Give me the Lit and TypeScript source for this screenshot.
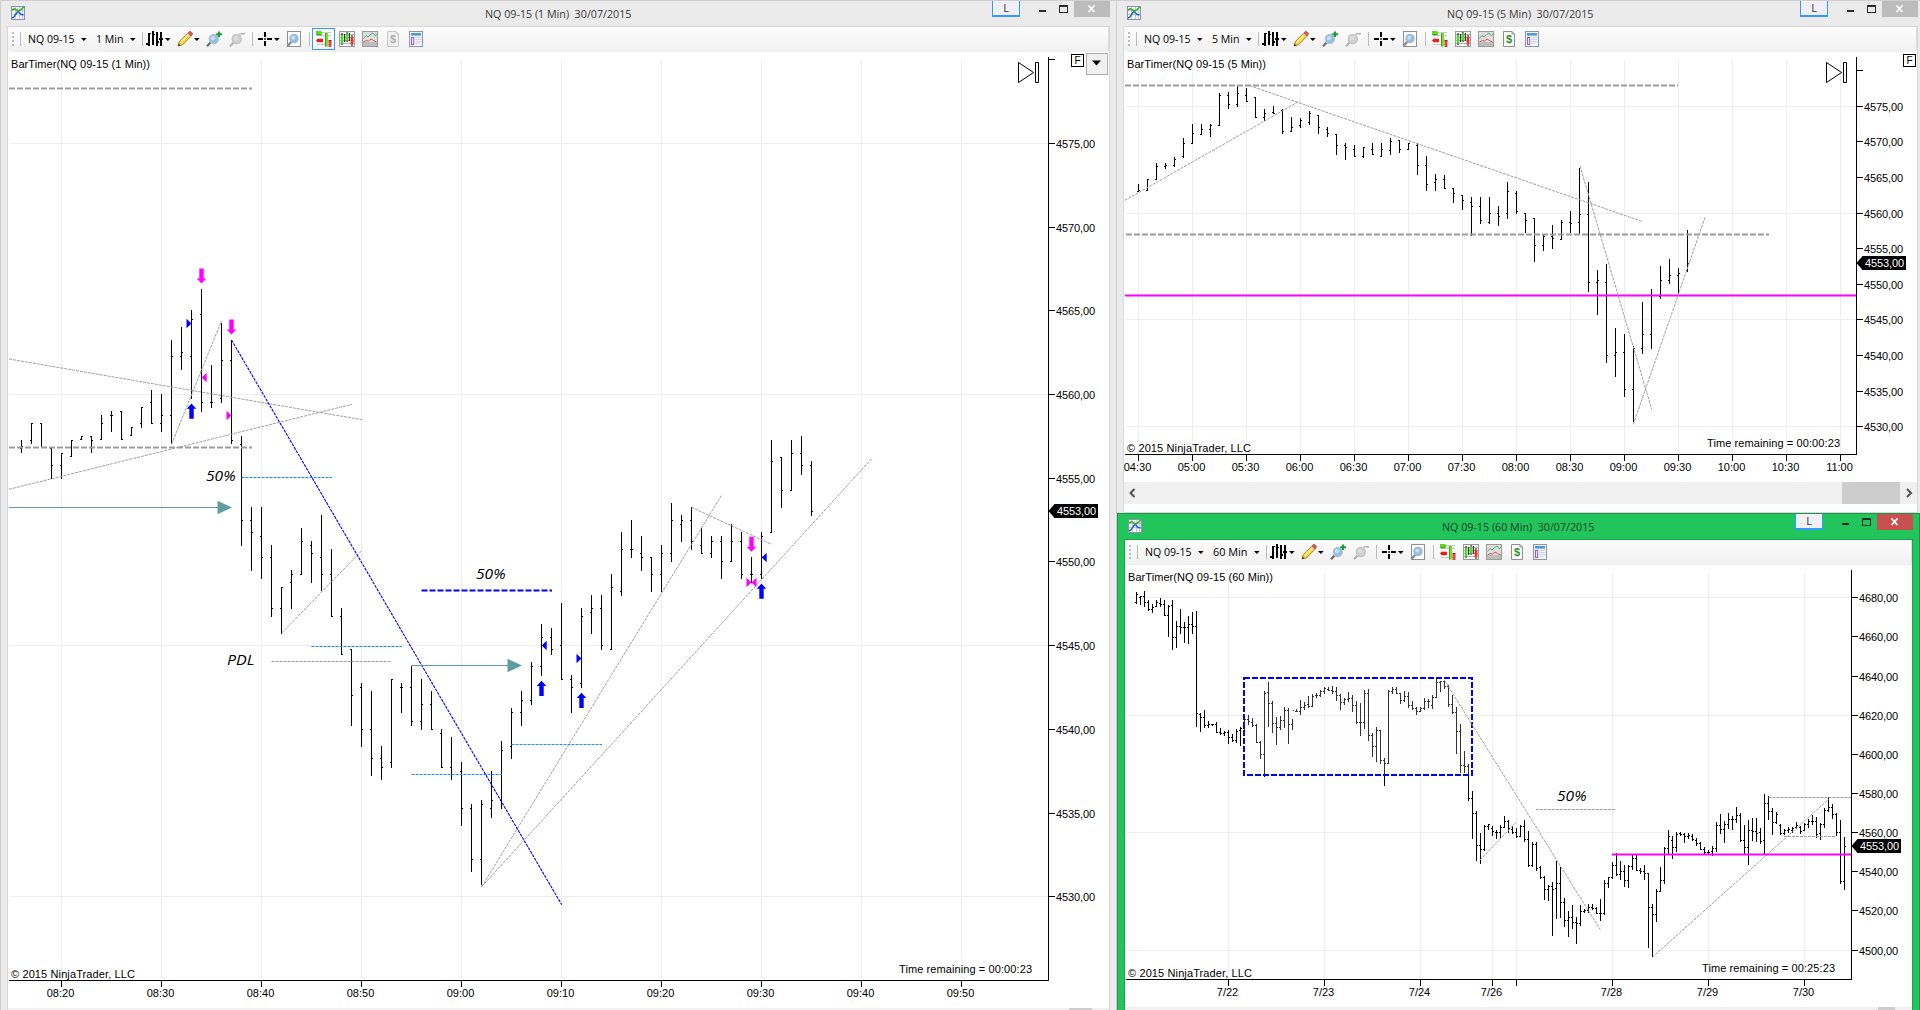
import { LitElement, html, svg, css, nothing } from "lit";
import { customElement, property } from "lit/decorators.js";

/* ---------- data model ---------- */

/** A run of OHLC bars: rows hold high, low, open, close measured down from `y` in 1/div px. */
interface Run { x: number; step: number; y: number; div: number; rows: string; }
interface Line { x1: number; y1: number; x2: number; y2: number; kind: string; }
interface Note { x: number; y: number; w: number; text: string; }
interface Mark { x: number; y: number; kind: "up" | "down" | "left" | "right"; tone: "buy" | "sell"; }
interface Chart {
  box: [number, number, number, number];
  left: number; top: number; axisX: number; axisTop: number; axisY: number;
  gridX: number[]; gridY: number[];
  prices: [number, string][]; times: [number, string][];
  last: number; labelX: number;
  runs: Run[]; lines: Line[]; notes: Note[]; marks: Mark[]; arrows: [number, number, number][];
  header: Note; copy: Note; timer: Note;
  zone?: [number, number, number, number];
  play?: [number, number]; flag?: [number, number]; menu?: [number, number];
}
interface Win {
  kind: string; title: string; titleW: number; interval: string; intervalW: number;
  active: boolean; picked: boolean; dollar: boolean; chart: Chart;
}

const ln = (kind: string, x1: number, y1: number, x2: number, y2: number): Line => ({ kind, x1, y1, x2, y2 });
const note = (text: string, x: number, y: number, w: number): Note => ({ text, x, y, w });
const mark = (kind: Mark["kind"], tone: Mark["tone"], x: number, y: number): Mark => ({ kind, tone, x, y });
const range = (n: number, start: number, step: number) => Array.from({ length: n }, (_, i) => start + i * step);

const oneMin: Chart = {
  box: [8, 52, 1101, 956],
  left: 10, top: 60, axisX: 1048, axisTop: 57, axisY: 980,
  gridX: range(10, 61, 100), gridY: [143, 394, 645, 896],
  prices: [[59, ""], [143, "4575,00"], [227, "4570,00"], [310, "4565,00"], [394, "4560,00"], [478, "4555,00"],
    [561, "4550,00"], [645, "4545,00"], [729, "4540,00"], [813, "4535,00"], [896, "4530,00"]],
  times: [[61, "08:20"], [161, "08:30"], [261, "08:40"], [361, "08:50"], [461, "09:00"], [561, "09:10"],
    [661, "09:20"], [761, "09:30"], [861, "09:40"], [961, "09:50"]],
  last: 511, labelX: 1056,
  runs: [
    { x: 21, step: 10, y: 240, div: 3, rows: `600 640 625 620,549 613 601 549,549 624 549 624,624 716 624 676,640 716 676 640,601 652 652 601,
      589 601 601 589,589 640 589 601,526 601 601 550,513 577 526 526,513 601 514 601,562 589 589 562,501 563 550 502,450 551 487 550,
      462 577 550 526,300 613 526 349,261 389 349 337,210 476 349 238,147 515 223 487,375 503 487 487,249 488 475 361,300 613 361 601,588 917 613 841` },
    { x: 251, step: 10, y: 500, div: 3, rows: `21 212 62 97,21 236 109 172,135 350 172 325,262 402 325 262,210 326 247 223,84 224 223 124,
      124 249 136 160,45 274 172 223,147 350 223 349,324 464 349 463,448 677 448 586,549 740 562 688,573 828 688 775,738 840 775 802,
      538 803 788 538,549 638 562 562,498 678 562 664,538 690 664 613,573 689 613 688,688 803 700 802,712 839 802 824,787 977 814 925,
      913 1116 925 1078,901 1155 1078 913,813 953 925 901,724 926 901 751,625 776 739 637,573 677 637 601,487 614 601 499,373 528 499 412,
      384 464 412 448,309 539 436 538,526 638 538 562,324 564 550 349,286 402 337 325,286 449 325 436,222 449 448 262` },
    { x: 621, step: 10, y: 420, div: 3, rows: `336 527 514 388,300 413 388 388,348 452 400 412,412 516 412 463,375 516 463 400,249 425 400 301,
      286 365 313 301,262 389 301 364,324 401 376 400,348 413 400 364,348 476 364 424,312 425 424 364,336 476 364 463,412 488 463 463,
      336 476 463 349,60 339 337 124,112 263 112 211,60 212 211 100,48 164 100 136,124 288 136 274` },
  ],
  lines: [
    ln("level", 9, 88.5, 252, 88.5), ln("level", 9, 447.5, 252, 447.5),
    ln("trend", 9, 359, 362, 419.7), ln("trend", 9, 489.3, 352, 404.3), ln("trend", 171.5, 444.3, 221.5, 320.7),
    ln("trend", 281.5, 633.3, 361.7, 550.7), ln("trend", 271.5, 661.5, 391, 661.5),
    ln("trend", 481.7, 886.7, 721.3, 495.7), ln("trend", 481.7, 886.7, 871.7, 458.7), ln("trend", 691.5, 507.3, 771.5, 544.3),
    ln("half", 241.5, 477.5, 332, 477.5), ln("half", 311.5, 646.5, 402, 646.5), ln("half", 411.5, 774.5, 502, 774.5), ln("half", 511.5, 744.5, 602, 744.5),
    ln("bluelevel", 421.5, 590.5, 552, 590.5), ln("bluetrend", 231.5, 340, 561.7, 904.7),
  ],
  arrows: [[9, 232, 507.5], [411.5, 522, 665.5]],
  marks: [
    mark("down", "sell", 201.5, 283.5), mark("down", "sell", 231.5, 334.5), mark("down", "sell", 751.5, 551.7),
    mark("up", "buy", 191.5, 403.5), mark("up", "buy", 541.5, 680.7), mark("up", "buy", 581.5, 692.7), mark("up", "buy", 761.5, 583.5),
    mark("right", "buy", 191.5, 323.5), mark("left", "sell", 201.7, 377.5), mark("right", "sell", 231.5, 415.5),
    mark("left", "buy", 541.7, 645.5), mark("right", "buy", 581.5, 658.5), mark("left", "buy", 761.7, 557.5),
    mark("right", "sell", 751.5, 582.5), mark("left", "sell", 751.5, 582.5),
  ],
  notes: [note("50%", 206, 481, 29.5), note("50%", 476, 579, 29.5), note("PDL", 227, 665, 27.5)],
  header: note("BarTimer(NQ 09-15 (1 Min))", 11, 68, 139),
  copy: note("© 2015 NinjaTrader, LLC", 11, 978, 124),
  timer: note("Time remaining = 00:00:23", 899, 973, 133),
  play: [1018, 62], flag: [1071, 54], menu: [1086, 53],
};

const fiveMin: Chart = {
  box: [1124, 52, 793, 430],
  left: 1126, top: 60, axisX: 1856, axisTop: 57, axisY: 454,
  gridX: range(14, 1138, 54), gridY: [106, 213, 319, 426],
  prices: [[70, ""], [106, "4575,00"], [141, "4570,00"], [177, "4565,00"], [213, "4560,00"], [248, "4555,00"],
    [284, "4550,00"], [319, "4545,00"], [355, "4540,00"], [391, "4535,00"], [426, "4530,00"]],
  times: ["04:30", "05:00", "05:30", "06:00", "06:30", "07:00", "07:30", "08:00", "08:30", "09:00", "09:30", "10:00", "10:30", "11:00"]
    .map((t, i) => [1138 + i * 54, t] as [number, string]),
  last: 263, labelX: 1864,
  runs: [
    { x: 1138, step: 9, y: 70, div: 3, rows: `342 366 364 361,328 362 361 328,279 329 328 289,280 296 289 286,262 290 286 268,204 264 259 220,
      162 221 219 190,162 194 192 178,162 200 178 166,69 167 166 76,66 116 75 103,48 110 103 70,54 96 76 94,82 144 82 142,118 152 142 130,
      108 132 127 130,118 192 120 184,142 185 184 172,144 174 166 151,123 164 157 130,135 192 136 172,171 200 178 190,193 254 193 226,
      219 269 226 232,226 261 238 259,231 263 259 232,219 255 238 253,219 260 259 238,204 254 241 214,210 248 212 238,219 240 238 220,
      219 315 226 286,258 362 286 343,312 362 337 328,315 356 328 355,354 399 355 370,376 419 376 391,381 499 397 409,381 462 409 451,
      381 461 457 430,408 467 430 439,336 446 430 364,363 432 370 424,430 489 430 451` },
    { x: 1534, step: 9, y: 0, div: 2.7034, rows: `590 708 590 663,633 679 663 639,607 673 639 645,595 648 647 601,570 631 601 604,453 634 601 580,
      491 789 580 763,730 852 763 758,714 981 763 961,886 1019 961 953,902 1073 953 1053,936 1140 1053 942,816 957 942 904,780 944 904 799,
      719 808 801 758,699 769 758 744,725 797 744 739,622 735 730 712` },
  ],
  lines: [
    ln("level", 1125, 85.5, 1678, 85.5), ln("level", 1126, 234.5, 1769, 234.5), ln("pivot", 1125, 295.5, 1856, 295.5),
    ln("trend", 1125, 200.3, 1299.7, 101), ln("trend", 1249.7, 85.7, 1642.7, 221.6),
    ln("trend", 1580, 166, 1651.7, 409.2), ln("trend", 1633.3, 424.3, 1705, 217.5),
  ],
  arrows: [], marks: [], notes: [],
  header: note("BarTimer(NQ 09-15 (5 Min))", 1127, 68, 139),
  copy: note("© 2015 NinjaTrader, LLC", 1127, 452, 124),
  timer: note("Time remaining = 00:00:23", 1707, 447, 133),
  play: [1826, 62], flag: [1903, 54],
};

const hourly: Chart = {
  box: [1125, 565, 787, 442],
  left: 1127, top: 573, axisX: 1851, axisTop: 570, axisY: 979,
  gridX: [1228, 1324, 1420, 1492, 1516, 1612, 1708, 1804], gridY: [597, 715, 832, 950],
  prices: [[597, "4680,00"], [636, "4660,00"], [676, "4640,00"], [715, "4620,00"], [754, "4600,00"], [793, "4580,00"],
    [832, "4560,00"], [871, "4540,00"], [910, "4520,00"], [950, "4500,00"]],
  times: [[1228, "7/22"], [1324, "7/23"], [1420, "7/24"], [1492, "7/26"], [1516, ""], [1612, "7/28"], [1708, "7/29"], [1804, "7/30"]],
  last: 846, labelX: 1859,
  runs: [
    { x: 1136, step: 4, y: 500, div: 3, rows: `275 312 308 284,288 314 292 290,273 322 289 307,300 334 308 328,312 340 328 321,300 322 319 306,
      294 320 309 312,300 348 312 345,315 411 345 318,300 450 315 412,363 444 412 378,327 402 378 381,366 429 381 381,348 432 381 372,
      336 402 374 378,333 681 378 640,640 696 642 651,630 684 651 675,664 684 675 673,672 678 673 673,666 700 672 696,684 705 697 699,
      693 709 699 696,690 732 696 711,702 726 712 720,687 729 720 694,681 738 690 685,657 690 685 658,645 675 658 664,654 681 667 676,
      672 729 676 727,723 777 727 764,573 830 764 580,546 681 578 609,603 699 609 669,651 735 669 681,648 690 681 660,621 684 660 630,
      624 732 630 672,657 690 672 631,627 636 633 634,600 645 634 622,606 630 622 616,588 624 613 618,582 622 618 588,579 595 587 585,
      570 591 585 573,561 582 573 566,561 574 567 570,558 582 570 573,561 603 573 585,582 630 585 606,594 615 606 597,576 606 597 594,
      585 636 594 615,603 672 615 666,609 708 666 667,570 687 667 579,567 723 579 706,699 771 706 739,681 786 739 692,690 792 692 780,
      774 858 780 789,570 793 789 573,561 582 573 567,561 582 567 580,579 612 580 602,573 606 602 588,576 624 588 615,603 630 615 624,
      621 645 624 633,621 636 633 624,594 630 624 603,597 624 603 603,585 627 615 591,537 594 591 546,543 576 546 543,540 567 543 558,
      555 621 558 612,585 642 612 636,621 762 636 693,672 819 693 795,753 819 795 798,792 902 798 895` },
    { x: 1472, step: 4, y: 680, div: 3, rows: `333 477 355 400,393 543 400 496,459 552 496 508,435 513 508 439,432 449 439 434,438 468 444 454,
      450 477 456 458,435 474 458 441,408 444 441 424,420 459 424 444,438 462 447 458,444 474 456 470,435 471 468 438,420 486 438 478,
      453 561 478 556,486 561 556 493,486 573 493 565,558 597 563 592,588 660 592 628,615 663 628 618,606 768 618 627,543 717 624 610,
      561 714 610 667,654 741 667 721,693 771 721 711,675 747 711 727,711 792 727 730,675 738 730 694,687 699 694 690,672 699 690 681,
      672 690 681 684,681 702 684 700,657 723 700 700,600 705 700 609,591 624 609 592,546 597 592 556,519 588 556 583,543 600 583 574,
      555 621 574 600,555 624 600 559,525 570 559 534,525 573 534 570,564 582 570 574,555 600 574 580,579 804 580 682,672 832 682 703,
      627 726 703 634,561 636 634 601,501 612 601 505,450 522 505 468,468 537 480 502,456 516 502 463,456 468 460 462,459 489 462 468,
      459 477 468 465,462 483 468 478,474 498 480 490,486 510 490 508,501 525 508 517,510 522 517 516,498 528 514 506,426 516 506 435,
      402 462 435 447,423 489 447 432,399 447 432 417,408 450 417 418,381 429 418 405,399 486 405 480,435 522 480 502,420 555 502 450,
      414 483 450 454,414 486 454 460,444 492 456 484,342 525 481 369,348 420 369 393,384 465 394 426,396 432 426 403,432 465 435 460,
      447 465 460 450,441 459 450 448,441 459 450 444,426 447 441 435,438 462 441 454,430 453 450 433,417 444 433 423,405 435 423 423,
      411 474 423 462,429 480 460 432,384 444 432 390,351 396 390 381,372 417 381 402,399 468 402 457,420 612 457 604,471 630 604 498` },
  ],
  lines: [
    ln("trend", 1444.3, 680, 1600.3, 929.7), ln("trend", 1480, 860, 1516.7, 821.7), ln("trend", 1652.3, 957.3, 1828.7, 799.3),
    ln("trend", 1768.5, 797.5, 1851, 797.5), ln("trend", 1784, 836.5, 1836, 836.5), ln("trend", 1536, 809.5, 1616, 809.5),
    ln("pivot", 1612, 854.5, 1851, 854.5),
  ],
  arrows: [], marks: [],
  notes: [note("50%", 1557, 801, 29.5)],
  header: note("BarTimer(NQ 09-15 (60 Min))", 1128, 581, 145),
  copy: note("© 2015 NinjaTrader, LLC", 1128, 977, 124),
  timer: note("Time remaining = 00:25:23", 1702, 972, 133),
  zone: [1244, 678, 228, 97],
};

/* ---------- icons ---------- */

const appIcon = svg`<svg class="ic" width="14" height="14" viewBox="0 0 14 14">
  <rect x=".5" y=".5" width="13" height="13" fill="#f4f4fb" stroke="#8f8fb0"/>
  <path d="M1 4.5h12M1 8.5h12M4.5 1v12M8.5 1v12M11.5 1v12" stroke="#bcbcd4" stroke-width=".8"/>
  <path d="M1 12c1-.2 2-.6 2.600-2S5 8 6 6.500 8 6 9 7.500s1.500 1.500 3.500 1.200" fill="none" stroke="#1d63c8" stroke-width="1.500"/>
  <path d="M1 4c1.500-.8 2.500-1.800 3.500-.8S7 4.800 8.500 4.500 11.500 2.500 13 .8" fill="none" stroke="#35b51c" stroke-width="1.600"/></svg>`;

const barsIcon = svg`<svg class="ic bars" width="17" height="16" viewBox="0 0 17 16" shape-rendering="crispEdges">
  <path d="M2 2h2v13H2zM0 12h2v2H0zM4 2h1v1H4zM6 0h2v14H6zM8 3h1v1H8zM10 1h2v14h-2zM12 10h1v2h-1zM14 1h2v14h-2zM13 7h4v2h-4z" fill="#000"/></svg>`;

const pencilIcon = svg`<svg class="ic pencil" width="16" height="16" viewBox="0 0 16 16">
  <path d="M1 15l1.300-4.500L11 1.800l3.300 3.200L5.500 13.800z" fill="#f7d437" stroke="#8d6b1c" stroke-width=".8"/>
  <path d="M3.500 11.800L12 3.300" stroke="#fff3a0" stroke-width="1.300"/>
  <path d="M11 1.800l1.300-1.200q.8-.6 1.500 0l1.500 1.500q.6.8 0 1.500L14.200 5z" fill="#e25b4a" stroke="#a33a2c" stroke-width=".6"/>
  <path d="M10.200 2.600l3.200 3.200" stroke="#c9c9c9" stroke-width="1.200"/>
  <path d="M1 15l.7-2.300 1.700 1.600z" fill="#222"/></svg>`;

const lens = (on: boolean) => svg`
  <path d="M1 15.300L5.300 10.800" stroke=${on ? "#6d6d6d" : "#b5b5b5"} stroke-width="2.200"/>
  <circle cx="7.800" cy="8" r="4.600" fill=${on ? "#8fbfe6" : "#cfcfcf"} stroke=${on ? "#b9c3cc" : "#c4c4c4"} stroke-width="1.200"/>
  <circle cx="7" cy="7.200" r="2.200" fill=${on ? "#c4e0f6" : "#dcdcdc"}/>`;

const zoomInIcon = svg`<svg class="ic zin" width="16" height="16" viewBox="0 0 16 16">${lens(true)}
  <path d="M13 .500v5.500M10.200 3.200H16" stroke="#12a22c" stroke-width="2"/></svg>`;
const zoomOutIcon = svg`<svg class="ic zout" width="16" height="16" viewBox="0 0 16 16">${lens(false)}
  <path d="M10.500 2.800H16" stroke="#bdbdbd" stroke-width="1.800"/></svg>`;

const crossIcon = svg`<svg class="ic cross" width="14" height="14" viewBox="0 0 14 14" shape-rendering="crispEdges">
  <path d="M6 0h2v5H6zM6 9h2v5H6zM0 6h5v2H0zM9 6h5v2H9z" fill="#000"/><path d="M6 6h2v2H6z" fill="#555"/></svg>`;

const pageIcon = svg`<svg class="ic page" width="16" height="16" viewBox="0 0 16 16">
  <rect x="1.500" y=".5" width="13" height="15" fill="#fff" stroke="#8f8f8f"/>
  <path d="M1.500 15L5.500 10.500" stroke="#8a8a8a" stroke-width="2.400"/>
  <circle cx="8" cy="7.500" r="4.200" fill="#8fbfe6" stroke="#a9bccb" stroke-width="1.200"/>
  <circle cx="7.300" cy="6.800" r="2" fill="#c4e0f6"/></svg>`;

const traderIcon = svg`<svg class="ic" width="16" height="16" viewBox="0 0 16 16">
  <path d="M1 4.500h14M1 13.500h14M7 1.500h8" stroke="#c9c9c9" stroke-width="1.200"/>
  <path d="M0 0h5l2 2-2 2H0z" fill="#5fd81c"/><path d="M.500 3.800h5" stroke="#2d7d0c" stroke-width=".8"/>
  <path d="M0 9.500l1.500-1.700h5.500v3.400H1.500z" fill="#e8201c"/>
  <rect x="9" y="2" width="3" height="13.500" fill="#6fe02c"/><rect x="9" y="2" width="1" height="13.500" fill="#4a9c1c"/>
  <rect x="12.500" y="10" width="3" height="6" fill="#e04a44"/><rect x="12.500" y="9" width="3" height="1.200" fill="#8e2a26"/></svg>`;

const candleIcon = svg`<svg class="ic" width="16" height="16" viewBox="0 0 16 16">
  <rect x=".5" y=".5" width="15" height="15" fill="#f6f6f6" stroke="#9b9b9b"/>
  <path d="M1 3.500h14M1 6.500h14M1 9.500h14M1 12.500h14" stroke="#b4b4b4"/>
  <path d="M3 2v12M5.700 3v8M8 1v10M10.300 2v8M13 4v11" stroke="#111" stroke-width="1"/>
  <rect x="1.800" y="4.500" width="2.400" height="8" fill="#48e020"/>
  <rect x="6.900" y="2.500" width="2.200" height="7" fill="#48e020"/>
  <rect x="11.700" y="6" width="2.600" height="7" fill="#ee2b25"/></svg>`;

const indicatorIcon = svg`<svg class="ic" width="16" height="16" viewBox="0 0 16 16">
  <rect x=".5" y=".5" width="15" height="15" fill="#dedede" stroke="#9b9b9b"/><rect x="1" y="11" width="14" height="4" fill="#bdbdbd"/>
  <path d="M1.500 7.500L4 4.500l2 1.500 2.500-2.500L11 2l2 2.500 2-1" fill="none" stroke="#4fb07a"/>
  <path d="M1.500 11l3-1.500 2 .5 2.500-2 2.500 1.500 3 1.500" fill="none" stroke="#d9534f"/></svg>`;

const dollarIcon = (on: boolean) => svg`<svg class="ic" width="16" height="16" viewBox="0 0 16 16">
  <path d="M2.500 .500H11L13.500 3v12.500h-11z" fill=${on ? "#fff" : "#f0f0f0"} stroke=${on ? "#8f8f8f" : "#c6c6c6"}/>
  <path d="M11 .500V3h2.500" fill="none" stroke=${on ? "#8f8f8f" : "#c6c6c6"}/>
  <text x="8" y="12" text-anchor="middle" font-family="Liberation Sans, sans-serif" font-weight="700" font-size="11" fill=${on ? "#2f8f28" : "#b0b0b0"}>$</text></svg>`;

const propsIcon = svg`<svg class="ic" width="16" height="16" viewBox="0 0 16 16">
  <rect x="1.500" y=".5" width="13" height="15" fill="#f3f5fa" stroke="#8d97a8"/>
  <rect x="3" y="2" width="10" height="2.600" fill="#4c9bd8"/>
  <rect x="3.500" y="6.500" width="2.200" height="7" fill="#efe4ff" stroke="#9358e6"/>
  <path d="M7.500 6.500h6M7.500 8.500h6M7.500 10.500h6M7.500 12.500h4" stroke="#cfd6e2"/></svg>`;

const caret = svg`<svg class="caret" width="6" height="4" viewBox="0 0 6 4"><path d="M0 1h5.600L2.800 4z" fill="#000"/></svg>`;

/* ---------- price chart ---------- */

@customElement("price-chart")
export class PriceChart extends LitElement {
  @property({ attribute: false }) data!: Chart;

  static styles = css`
    :host { display: block; }
    svg { display: block; background: #fff; font: 11px "Liberation Sans", Arial, sans-serif; }
    .grid { fill: #eeeeee; }
    .ink { fill: #000; }
    .trend { stroke: #a0a0a0; stroke-width: 1; stroke-dasharray: 3 1; }
    .level { stroke: #9c9c9c; stroke-width: 2; stroke-dasharray: 6 2; }
    .half { stroke: #1e90ff; stroke-width: 1; stroke-dasharray: 3 1; }
    .bluelevel { stroke: #0000ff; stroke-width: 2; stroke-dasharray: 6 2; }
    .bluetrend { stroke: #0000ff; stroke-width: 1.1; stroke-dasharray: 3 1; }
    .pivot { stroke: #ff00ff; stroke-width: 2; }
    .teal { fill: #5f9ea0; }
    .buy { fill: #0000ff; }
    .sell { fill: #ff00ff; }
    .zone { fill: rgba(250, 250, 250, 0.2); stroke: #0000ff; stroke-width: 2; stroke-dasharray: 6 2; }
    .note { font: italic 15px "Open Sans", "Noto Sans", sans-serif; }
    .tag { fill: #fff; }
    .outline { fill: #fff; stroke: #000; stroke-width: 1; }
    .menu { fill: #f0f0f0; stroke: #adadad; }
    .flag { font-size: 10px; }
  `;

  private bars(run: Run) {
    const px = (v: number) => run.y + v / run.div;
    return run.rows.split(",").map((row, i) => {
      const [h, l, o, c] = row.trim().split(/\s+/).map(Number);
      const x = run.x + i * run.step;
      const top = Math.round(px(h)), bottom = Math.round(px(l));
      const open = Math.min(Math.floor(px(o)), bottom - 1), close = Math.min(Math.floor(px(c)), bottom - 1);
      return `M${x} ${top}h1V${bottom}h-1zM${x - 1} ${open}h1v1h-1zM${x + 1} ${close}h1v1h-1z`;
    }).join("");
  }

  private mark(m: Mark) {
    const { x, y } = m;
    const d = m.kind === "down" ? `M${x} ${y}l-4.800-5h2.600v-10h4.400v10h2.600z`
      : m.kind === "up" ? `M${x} ${y}l4.800 5.300h-2.600v10h-4.400v-10h-2.600z`
      : m.kind === "left" ? `M${x} ${y}l5-4.700v9.400z` : `M${x} ${y}l-5-4.700v9.400z`;
    return svg`<path class=${m.tone} d=${d}/>`;
  }

  private label(n: Note) {
    return svg`<text class="ink" x=${n.x} y=${n.y} textLength=${n.w}>${n.text}</text>`;
  }

  private remark(n: Note) {
    return svg`<text class="ink note" x=${n.x} y=${n.y} textLength=${n.w} lengthAdjust="spacingAndGlyphs">${n.text}</text>`;
  }

  render() {
    const d = this.data;
    const [bx, by, bw, bh] = d.box;
    return html`<svg width=${bw} height=${bh} viewBox="${bx} ${by} ${bw} ${bh}">
      <g class="grid" shape-rendering="crispEdges">
        ${d.gridX.map((x) => svg`<rect x=${x} y=${d.top} width="1" height=${d.axisY - d.top}/>`)}
        ${d.gridY.map((y) => svg`<rect x=${d.left} y=${y} width=${d.axisX - d.left} height="1"/>`)}
      </g>
      <g class="ink" shape-rendering="crispEdges">
        <rect x=${d.axisX} y=${d.axisTop} width="1" height=${d.axisY - d.axisTop + 1}/>
        <rect x=${d.left - 1} y=${d.axisY} width=${d.axisX - d.left + 2} height="1"/>
        ${d.prices.map(([y]) => svg`<rect x=${d.axisX + 1} y=${y} width="6" height="1"/>`)}
        ${d.times.map(([x]) => svg`<rect x=${x} y=${d.axisY + 1} width="1" height="6"/>`)}
        ${d.runs.map((r) => svg`<path d=${this.bars(r)}/>`)}
      </g>
      ${d.prices.map(([y, t]) => t ? svg`<text class="ink" x=${d.labelX} y=${y + 4.600} textLength="39">${t}</text>` : nothing)}
      ${d.times.map(([x, t]) => t ? svg`<text class="ink" x=${x - 0.5} y=${d.axisY + 17} text-anchor="middle">${t}</text>` : nothing)}
      ${d.zone ? svg`<rect class="zone" x=${d.zone[0]} y=${d.zone[1]} width=${d.zone[2]} height=${d.zone[3]}/>` : nothing}
      ${d.lines.map((l) => svg`<line class=${l.kind} x1=${l.x1} y1=${l.y1} x2=${l.x2} y2=${l.y2}/>`)}
      ${d.arrows.map(([a, b, y]) => svg`<path class="teal" d="M${a} ${y - 0.5}H${b - 14.500}v-6.200L${b} ${y}l-14.500 6.700v-6.200H${a}z"/>`)}
      ${d.marks.map((m) => this.mark(m))}
      ${d.notes.map((n) => this.remark(n))}
      ${this.label(d.header)} ${this.label(d.copy)} ${this.label(d.timer)}
      <path class="ink" d="M${d.axisX + 0.5} ${d.last}l6-7h43.500v14h-43.500z"/>
      <text class="tag" x=${d.labelX + 1} y=${d.last + 4} textLength="39">4553,00</text>
      ${d.play ? svg`<path class="outline" d="M${d.play[0] + 0.5} ${d.play[1] + 0.5}v20l15-10zM${d.play[0] + 17.500} ${d.play[1] + 0.5}h3v20h-3z"/>` : nothing}
      ${d.flag ? svg`<rect class="outline" x=${d.flag[0] + 0.5} y=${d.flag[1] + 0.5} width="12" height="12"/>
        <text class="ink flag" x=${d.flag[0] + 6.500} y=${d.flag[1] + 10} text-anchor="middle">F</text>` : nothing}
      ${d.menu ? svg`<rect class="menu" x=${d.menu[0] + 0.5} y=${d.menu[1] + 0.5} width="21" height="21"/>
        <path class="ink" d="M${d.menu[0] + 6} ${d.menu[1] + 7.500}h9l-4.500 5z"/>` : nothing}
    </svg>`;
  }
}

/* ---------- window ---------- */

@customElement("chart-window")
export class ChartWindow extends LitElement {
  @property({ attribute: false }) win!: Win;

  static styles = css`
    :host { display: block; }
    .frame { box-sizing: border-box; display: flex; flex-direction: column; height: 100%; padding: 0 7px; background: #ebebeb;
      box-shadow: inset 1px 1px 0 #cfcfcf, inset -1px 0 0 #cfcfcf; --edge: #d8d8d8; --text: #3a3a3a; --close: #bcbcbc; }
    .frame.active { background: #22c55b; box-shadow: inset 1px 1px 0 #1c9347, inset -1px 0 0 #1c9347; --edge: #1ca24a; --text: #1f3d2a; --close: #c75050; }
    .title { display: grid; grid-template-columns: minmax(0, 1fr) auto minmax(0, 1fr); height: 26px; flex: none; }
    .badge { padding: 6px 0 0 4px; }
    svg { display: block; flex: none; overflow: visible; }
    .caption { padding-top: 5px; }
    .ui { font: 11.5px "Open Sans", "Noto Sans", sans-serif; fill: #000; }
    .caption .ui { fill: var(--text); }
    .controls { display: flex; justify-content: flex-end; padding-top: 1px; height: 16px; }
    .link { box-sizing: border-box; width: 28px; border: 1px solid #3399ff; border-width: 0 1.5px 2px; background: #f0f0f6; color: #333;
      font: 11px/14px "Open Sans", sans-serif; text-align: center; }
    .min { width: 7px; height: 2px; margin: 9px 0 0 19px; background: #2c2c2c; }
    .max { box-sizing: border-box; width: 9px; height: 8px; margin: 4px 0 0 13px; border: 1px solid #2c2c2c; border-top-width: 2px; }
    .close { width: 36px; margin-left: 6px; background: var(--close); }
    .body { display: flex; flex-direction: column; flex: 1; min-height: 0; border: 1px solid var(--edge); background: #fff; }
    .toolbar { box-sizing: border-box; display: flex; align-items: center; height: 25px; padding-bottom: 1px; flex: none;
      background: linear-gradient(#fdfdfd, #f0f0f0); border-radius: 0 0 3px 3px; box-shadow: inset -1px 0 0 #dcdcdc; }
    .grip { width: 2px; height: 14px; margin-left: 4px; background: repeating-linear-gradient(#bdbdbd 0 2px, transparent 2px 4px); }
    .sep { width: 1px; height: 14px; margin-left: 6px; background: #bcbcbc; }
    .symbol { margin-left: 7px; }
    .interval { margin-left: 9px; }
    .caret { margin-left: 6px; }
    .bars { margin-left: 3px; }
    .bars + .caret { margin-left: 2px; }
    .pencil, .zin, .page { margin-left: 6px; }
    .pencil + .caret { margin-left: 1px; }
    .zout { margin-left: 7px; }
    .zout + .sep { margin-left: 7px; }
    .cross { margin-left: 5px; }
    .cross + .caret { margin-left: 2px; }
    .page + .sep { margin-left: 7px; }
    .tool { box-sizing: border-box; display: flex; align-items: center; justify-content: center; width: 23px; height: 22px; }
    .tool.first { margin-left: 2px; }
    .tool.on { border: 1px solid #3399ff; background: #fafcff; }
    .scroll { display: flex; align-items: center; height: 22px; flex: none; background: #f0f0f0; }
    .chev { width: 17px; }
    .track { flex: 1; display: flex; justify-content: flex-end; height: 100%; }
    .thumb { background: #cdcdcd; width: 58px; }
    .oneMin .thumb { width: 23px; }
    .hourly .thumb { width: 17px; }
  `;

  private text(t: string, w: number, cls: string) {
    return html`<svg class=${cls} width=${w} height="18" viewBox="0 0 ${w} 18"><text class="ui" x="0" y="13" textLength=${w - 0.5} lengthAdjust="spacingAndGlyphs" xml:space="preserve">${t}</text></svg>`;
  }

  private chevron(d: string) {
    return html`<svg class="chev" width="17" height="10" viewBox="0 0 17 10"><path d=${d} fill="none" stroke="#505050" stroke-width="2"/></svg>`;
  }

  render() {
    const w = this.win;
    return html`<div class="frame ${w.kind} ${w.active ? "active" : ""}">
      <div class="title">
        <div class="badge">${appIcon}</div>
        <div class="caption">${this.text(w.title, w.titleW, "")}</div>
        <div class="controls">
          <div class="link">L</div><div class="min"></div><div class="max"></div>
          <div class="close"><svg width="36" height="16" viewBox="0 0 36 16"><path d="M14.500 4.500l6 6.500M20.500 4.500l-6 6.500" stroke="#fff" stroke-width="1.800"/></svg></div>
        </div>
      </div>
      <div class="body">
        <div class="toolbar">
          <div class="grip"></div><div class="sep"></div>
          ${this.text("NQ 09-15", 47, "symbol")}${caret}
          ${this.text(w.interval, w.intervalW, "interval")}${caret}
          <div class="sep"></div>${barsIcon}${caret}${pencilIcon}${caret}${zoomInIcon}${zoomOutIcon}
          <div class="sep"></div>${crossIcon}${caret}${pageIcon}
          <div class="sep"></div>
          <div class="tool first ${w.picked ? "on" : ""}">${traderIcon}</div>
          <div class="tool">${candleIcon}</div>
          <div class="tool">${indicatorIcon}</div>
          <div class="tool">${dollarIcon(w.dollar)}</div>
          <div class="tool">${propsIcon}</div>
        </div>
        <price-chart .data=${w.chart}></price-chart>
        <div class="scroll">
          ${this.chevron("M10.500 1l-4 4 4 4")}
          <div class="track"><div class="thumb"></div></div>
          ${this.chevron("M7 1l4 4-4 4")}
        </div>
      </div>
    </div>`;
  }
}

/* ---------- desktop ---------- */

@customElement("app-root")
export class AppRoot extends LitElement {
  static styles = css`
    :host { display: block; width: 1920px; height: 1010px; overflow: hidden; background: #ebebeb; }
    .desk { display: grid; grid-template-columns: 1116px 809px; height: 1010px; }
    .one { width: 1117px; height: 1040px; }
    .side { display: flex; flex-direction: column; position: relative; background: #e4e4e4; box-shadow: inset 1px 0 0 #cfcfcf; }
    .five { height: 513px; flex: none; }
    .hour { width: 803px; height: 525px; margin-left: 1px; flex: none; }
  `;

  private one: Win = { kind: "oneMin", title: "NQ 09-15 (1 Min)\u00a0 30/07/2015", titleW: 147, interval: "1 Min", intervalW: 28, active: false, picked: true, dollar: false, chart: oneMin };
  private five: Win = { kind: "fiveMin", title: "NQ 09-15 (5 Min)\u00a0 30/07/2015", titleW: 147, interval: "5 Min", intervalW: 28, active: false, picked: false, dollar: true, chart: fiveMin };
  private hour: Win = { kind: "hourly", title: "NQ 09-15 (60 Min)\u00a0 30/07/2015", titleW: 153, interval: "60 Min", intervalW: 35, active: true, picked: false, dollar: true, chart: hourly };

  render() {
    return html`<div class="desk">
      <chart-window class="one" .win=${this.one}></chart-window>
      <div class="side">
        <chart-window class="five" .win=${this.five}></chart-window>
        <chart-window class="hour" .win=${this.hour}></chart-window>
      </div>
    </div>`;
  }
}
